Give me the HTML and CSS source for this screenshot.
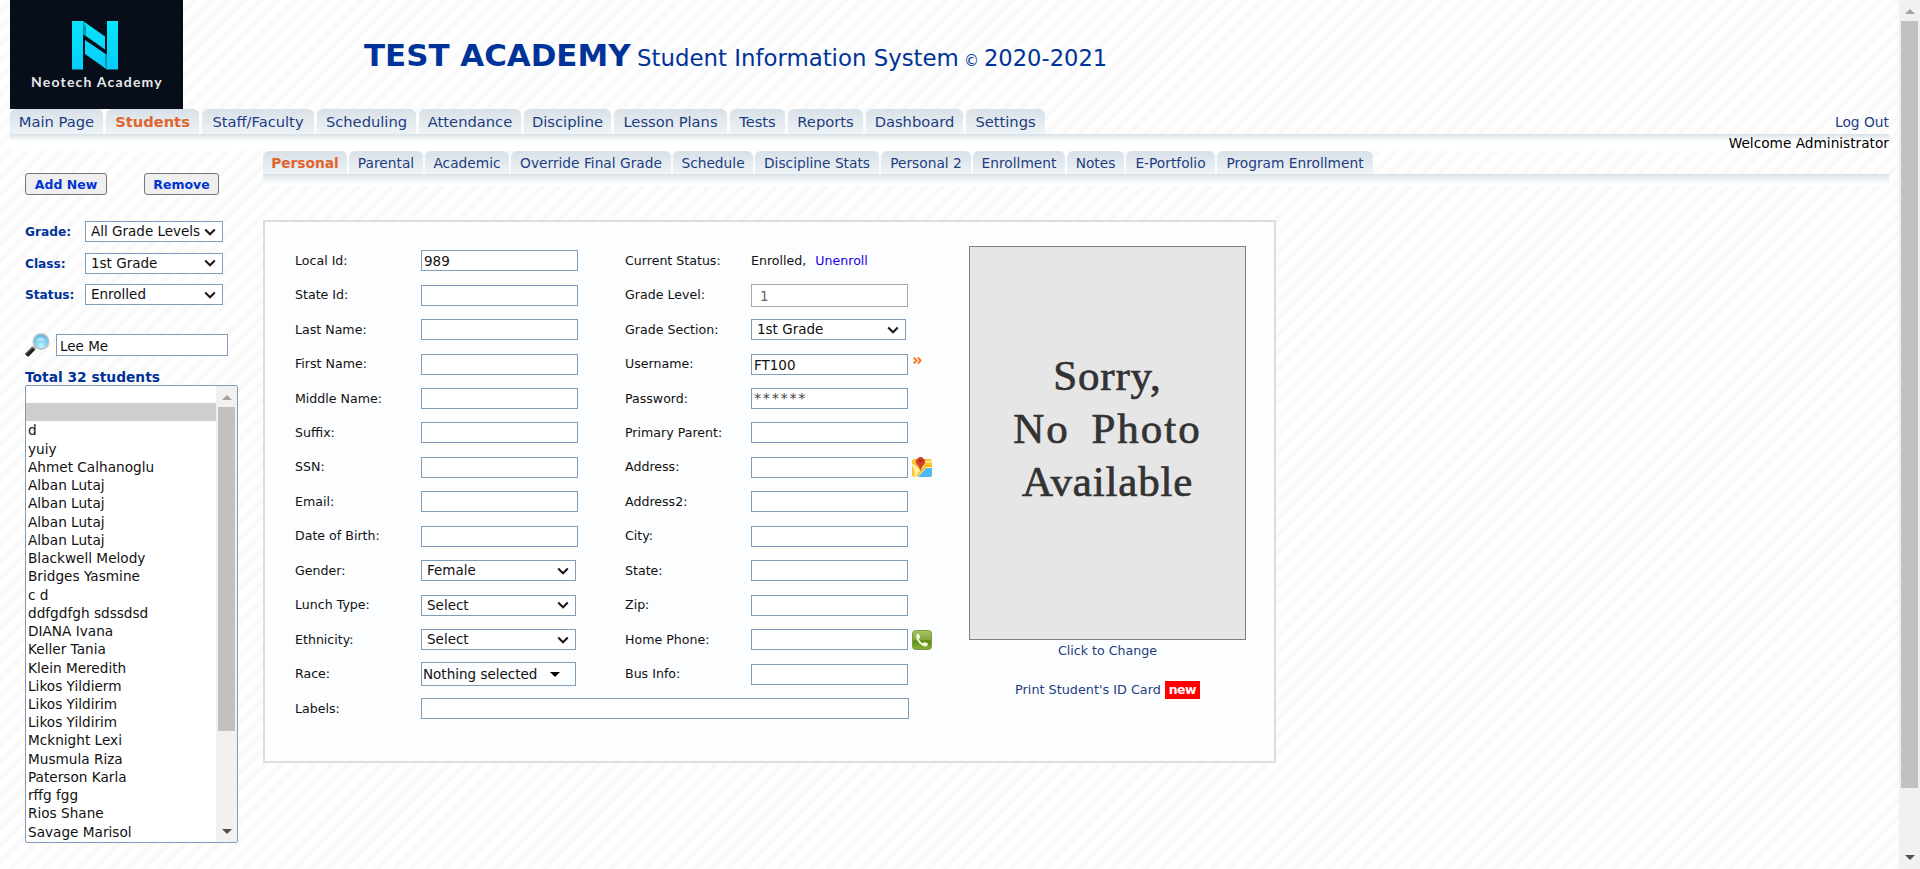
FILE: index.html
```html
<!DOCTYPE html>
<html lang="en">
<head>
<meta charset="utf-8">
<title>Test Academy - Student Information System</title>
<link rel="stylesheet" href="styles.css">
</head>
<body>
<svg width="0" height="0" class="defs">
  <defs>
    <symbol id="chev" viewBox="0 0 12 8"><path d="M1.2 1.5 6 6.2l4.800-4.700" fill="none" stroke="#1a1a1a" stroke-width="2.100"/></symbol>
    <symbol id="up" viewBox="0 0 10 5"><path d="M0 5 5 0l5 5z"/></symbol>
    <symbol id="down" viewBox="0 0 10 5"><path d="M0 0h10L5 5z"/></symbol>
  </defs>
</svg>
<div class="window">
  <div class="page">
    <header class="header">
      <div class="logo">
        <svg class="logo-mark" viewBox="0 0 46 49" width="46" height="49">
          <defs><linearGradient id="cy" x1="0" y1="0" x2="0" y2="1"><stop offset="0" stop-color="#08e6fa"/><stop offset="1" stop-color="#07ccfb"/></linearGradient></defs>
          <path fill="url(#cy)" d="M0 0h11l22 15.500V28.500L11 13V48.500H0zM35 0h11v48.500H35L13 33V19l22 15z"/>
          <path d="M11 0v13l3 2V5z" fill="#0595b0"/><path d="M35 48.500V34l-2-1.500v12z" fill="#0595b0"/>
        </svg>
        <span class="logo-text">Neotech Academy</span>
      </div>
      <h1 class="title"><b>TEST ACADEMY</b><span class="sub">Student Information System</span><span class="copy">©</span><span class="year">2020-2021</span></h1>
    </header>
    <nav class="main-nav">
      <a class="tab">Main Page</a><a class="tab active">Students</a><a class="tab">Staff/Faculty</a><a class="tab">Scheduling</a><a class="tab">Attendance</a><a class="tab">Discipline</a><a class="tab">Lesson Plans</a><a class="tab">Tests</a><a class="tab">Reports</a><a class="tab">Dashboard</a><a class="tab">Settings</a>
      <a class="logout">Log Out</a>
    </nav>
    <div class="nav-bar"><span>Welcome Administrator</span></div>
    <div class="body">
      <aside class="side">
        <div class="buttons"><span class="btn add">Add New</span><span class="btn rem">Remove</span></div>
        <div class="filters">
          <label>Grade:</label><div class="select"><span>All Grade Levels</span><svg width="12" height="8"><use href="#chev"/></svg></div>
          <label>Class:</label><div class="select"><span>1st Grade</span><svg width="12" height="8"><use href="#chev"/></svg></div>
          <label>Status:</label><div class="select"><span>Enrolled</span><svg width="12" height="8"><use href="#chev"/></svg></div>
        </div>
        <div class="search">
          <svg width="25" height="25" viewBox="0 0 25 25">
            <defs><radialGradient id="lens" cx=".5" cy=".8" r=".8"><stop offset="0" stop-color="#c4f4ff"/><stop offset=".5" stop-color="#7fd2f3"/><stop offset="1" stop-color="#4eaee0"/></radialGradient></defs>
            <path d="M1.500 22.500 9 15" stroke="#222" stroke-width="4.500"/><path d="M1 20.500 8 14" stroke="#888" stroke-width="1"/>
            <path d="M8.500 15.500l2-2" stroke="#999" stroke-width="2.500"/>
            <circle cx="16" cy="8.500" r="7.600" fill="url(#lens)" stroke="#bcc3ca" stroke-width="1.800"/>
            <path d="M11 7a5.500 4.500 0 0 1 10 0q-5 2-10 0z" fill="#d8f0fb" opacity=".6"/>
          </svg>
          <div class="input">Lee Me</div>
        </div>
        <div class="total">Total 32 students</div>
        <div class="listbox">
          <ul>
            <li></li><li class="sel"></li><li>d</li><li>yuiy</li><li>Ahmet Calhanoglu</li><li>Alban Lutaj</li><li>Alban Lutaj</li><li>Alban Lutaj</li><li>Alban Lutaj</li><li>Blackwell Melody</li><li>Bridges Yasmine</li><li>c d</li><li>ddfgdfgh sdssdsd</li><li>DIANA Ivana</li><li>Keller Tania</li><li>Klein Meredith</li><li>Likos Yildierm</li><li>Likos Yildirim</li><li>Likos Yildirim</li><li>Mcknight Lexi</li><li>Musmula Riza</li><li>Paterson Karla</li><li>rffg fgg</li><li>Rios Shane</li><li>Savage Marisol</li>
          </ul>
          <div class="scroll list-scroll"><svg class="dim" width="10" height="5"><use href="#up"/></svg><i></i><svg width="10" height="5"><use href="#down"/></svg></div>
        </div>
      </aside>
      <main class="content">
        <nav class="sub-nav">
          <a class="tab active">Personal</a><a class="tab">Parental</a><a class="tab">Academic</a><a class="tab">Override Final Grade</a><a class="tab">Schedule</a><a class="tab">Discipline Stats</a><a class="tab">Personal 2</a><a class="tab">Enrollment</a><a class="tab">Notes</a><a class="tab">E-Portfolio</a><a class="tab">Program Enrollment</a>
        </nav>
        <div class="sub-bar"></div>
        <section class="panel">
          <div class="form">
            <label>Local Id:</label><div class="input">989</div><label>Current Status:</label><div class="plain">Enrolled,<a>Unenroll</a></div>
            <label>State Id:</label><div class="input"></div><label>Grade Level:</label><div class="input disabled">1</div>
            <label>Last Name:</label><div class="input"></div><label>Grade Section:</label><div class="select"><span>1st Grade</span><svg width="12" height="8"><use href="#chev"/></svg></div>
            <label>First Name:</label><div class="input"></div><label>Username:</label><div class="cell"><div class="input">FT100</div><svg class="more" width="9" height="7" viewBox="0 0 9 7"><path d="M.8.500 3.500 3.500.8 6.500M4.900.500l2.800 3-2.800 3" fill="none" stroke="#ff7a22" stroke-width="2"/></svg></div>
            <label>Middle Name:</label><div class="input"></div><label>Password:</label><div class="input pass">******</div>
            <label>Suffix:</label><div class="input"></div><label>Primary Parent:</label><div class="input"></div>
            <label>SSN:</label><div class="input"></div><label>Address:</label><div class="cell"><div class="input"></div>
              <svg class="ico" width="20" height="20" viewBox="0 0 20 20">
                <defs><clipPath id="mc"><rect y="2" width="20" height="18" rx="2.500"/></clipPath></defs>
                <g clip-path="url(#mc)"><rect width="20" height="20" fill="#fbc52c"/><path d="M5 20l7-7 2-3 6-2v12z" fill="#4db9f5"/><path d="M0 9q4 4 2 11h4l8-9h6V8h-8L8 14Q5 8 0 7zM12 4h8v1.500h-8z" fill="#fff0b0"/><path d="M13 8h7v2h-6l-8 9H4z" fill="#fbb917"/></g>
                <path d="M8.500 14Q8 10 5 7.500A4.500 4.500 0 1 1 12 7.500Q9 10 8.500 14z" fill="#d8402c"/><circle cx="8.500" cy="3.800" r="1.600" fill="#a82a1c"/>
              </svg></div>
            <label>Email:</label><div class="input"></div><label>Address2:</label><div class="input"></div>
            <label>Date of Birth:</label><div class="input"></div><label>City:</label><div class="input"></div>
            <label>Gender:</label><div class="select"><span>Female</span><svg width="12" height="8"><use href="#chev"/></svg></div><label>State:</label><div class="input"></div>
            <label>Lunch Type:</label><div class="select"><span>Select</span><svg width="12" height="8"><use href="#chev"/></svg></div><label>Zip:</label><div class="input"></div>
            <label>Ethnicity:</label><div class="select"><span>Select</span><svg width="12" height="8"><use href="#chev"/></svg></div><label>Home Phone:</label><div class="cell"><div class="input"></div>
              <svg class="ico" width="20" height="20" viewBox="0 0 20 20">
                <defs><linearGradient id="gr" x1="0" y1="0" x2="0" y2="1"><stop offset="0" stop-color="#a9c468"/><stop offset=".48" stop-color="#84a83a"/><stop offset=".55" stop-color="#5f8a10"/><stop offset="1" stop-color="#86b43a"/></linearGradient></defs>
                <rect x=".5" y=".5" width="19" height="19" rx="3" fill="url(#gr)" stroke="#7c9b45"/>
                <path d="M4.500 4.200 7 3.800l1.200 3.700-1.500 1.400q1.300 3 4.200 4.300l1.500-1.300 3.600 1.600-.8 2.500q-2.200 1-5-.6Q5.200 12 4.300 7.500z" fill="#f2f8e4"/>
              </svg></div>
            <label>Race:</label><div class="select multi"><span>Nothing selected</span><svg width="10" height="5"><use href="#down"/></svg></div><label>Bus Info:</label><div class="input"></div>
            <label>Labels:</label><div class="input wide"></div>
          </div>
          <div class="photo-col">
            <div class="photo">Sorry,<br><span>No Photo</span><br>Available</div>
            <a class="change">Click to Change</a>
            <a class="print">Print Student's ID Card <b>new</b></a>
          </div>
        </section>
      </main>
    </div>
  </div>
  <div class="scroll page-scroll"><svg class="dim" width="10" height="5"><use href="#up"/></svg><i></i><svg width="10" height="5"><use href="#down"/></svg></div>
</div>
</body>
</html>
```
FILE: styles.css
```css
* { box-sizing: border-box; }
body { margin: 0; height: 869px; overflow: hidden; font-family: "DejaVu Sans", sans-serif; font-size: 12.6px; color: #111; background: #fff repeating-linear-gradient(135deg, #fff 0, #fefefe 4px, #f8f8f8 8px, #f9f9f9 9px, #fff 11.8px); }
svg { display: block; flex: none; }
.defs { position: absolute; }
.window { display: flex; height: 869px; }
.page { flex: 1; padding: 0 10px; min-width: 0; }

.header { display: flex; height: 109px; }
.logo { width: 173px; height: 109px; background: #070e1a; display: flex; flex-direction: column; align-items: center; padding: 21px 2px 0 0; }
.logo-mark { margin-right: 1px; }
.logo-text { margin: 3px 0 0 3px; font-family: Lato, sans-serif; font-weight: 700; font-size: 14px; line-height: 18px; letter-spacing: 1.2px; color: #e8e8ea; white-space: nowrap; }
.title { margin: 0 0 0 181px; padding-top: 36px; height: 76px; display: flex; align-items: baseline; font-weight: 400; color: #039; white-space: nowrap; line-height: 38px; }
.title b { font-size: 30.9px; width: 273px; }
.title .sub { font-size: 22.85px; width: 327px; }
.title .copy { font-size: 15px; width: 20px; }
.title .year { font-size: 22.6px; }

.main-nav, .sub-nav { display: flex; white-space: nowrap; }
.tab { display: flex; align-items: center; justify-content: center; border-radius: 6px 6px 0 0; background: linear-gradient(#d8e1e8, #eef3f6); color: #1d3d80; }
.tab.active { color: #e0642c; font-weight: 700; }
.main-nav { height: 25px; gap: 3px; font-size: 14.7px; }
.main-nav .tab:nth-child(1) { width: 93px; }
.main-nav .tab:nth-child(2) { width: 93px; }
.main-nav .tab:nth-child(3) { width: 112px; }
.main-nav .tab:nth-child(4) { width: 99px; }
.main-nav .tab:nth-child(5) { width: 102px; }
.main-nav .tab:nth-child(6) { width: 87px; }
.main-nav .tab:nth-child(7) { width: 113px; }
.main-nav .tab:nth-child(8) { width: 55px; }
.main-nav .tab:nth-child(9) { width: 75px; }
.main-nav .tab:nth-child(10) { width: 97px; }
.main-nav .tab:nth-child(11) { width: 79px; }
.logout { margin-left: auto; color: #1d3d80; font-size: 13.8px; line-height: 26px; }
.nav-bar { height: 17px; background: linear-gradient(#d8e1e8, #f8fafa 6px, #fff 9px); text-align: right; font-size: 13.7px; line-height: 18px; color: #000; }

.body { display: flex; }
.side { width: 253px; padding: 22px 0 0 15px; }
.buttons { display: flex; gap: 37px; }
.btn { height: 22px; border: 1px solid #767676; border-radius: 3px; background: #efefef; color: #0033cf; font-weight: 700; font-size: 12.5px; line-height: 21px; text-align: center; }
.btn.add { width: 82px; }
.btn.rem { width: 75px; }
.filters { margin-top: 26px; display: grid; grid-template-columns: 60px 138px; grid-auto-rows: 21px; row-gap: 10.5px; color: #039; }
.filters label { font-weight: 700; font-size: 12.2px; line-height: 22px; }
.select { height: 21px; border: 1px solid #7f9db9; background: #fff; display: flex; align-items: center; justify-content: space-between; padding: 0 6px 0 5px; font-size: 13.5px; color: #111; white-space: nowrap; }
.select span { overflow: hidden; line-height: 19px; }
.filters .select span { width: 109px; }
.input { height: 21px; border: 1px solid #7f9db9; background: #fff; padding: 0 2px; font-size: 13.5px; line-height: 20px; color: #111; }
.search { display: flex; gap: 6px; margin-top: 28px; }
.search .input { width: 172px; height: 22px; margin-top: 1px; padding-left: 3px; line-height: 22px; }
.total { margin-top: 9px; height: 18px; font-weight: 700; font-size: 13.8px; line-height: 20px; color: #039; }
.listbox { width: 213px; height: 458px; border: 1px solid #7f9db9; border-radius: 2px; background: #fff; display: flex; justify-content: space-between; overflow: hidden; }
.listbox ul { list-style: none; margin: -1px 0 0; padding: 0; width: 190px; font-size: 13.65px; }
.listbox li { height: 18.24px; line-height: 18px; padding-left: 2px; }
.listbox .sel { background: #cecece; }
.scroll { display: flex; flex-direction: column; align-items: center; background: #f1f1f1; width: 21px; fill: #505050; }
.scroll .dim { fill: #a3a3a3; }
.scroll i { background: #c1c1c1; width: 17px; }
.list-scroll { padding-top: 9px; }
.list-scroll i { height: 324px; margin: 7px 0 98px; }
.page-scroll { padding-top: 9px; }
.page-scroll i { height: 767px; margin: 7px 0 67px; }

.content { flex: 1; min-width: 0; }
.sub-nav { height: 23px; gap: 2px; font-size: 13.75px; }
.sub-nav .tab:nth-child(1) { width: 84px; }
.sub-nav .tab:nth-child(2) { width: 74px; }
.sub-nav .tab:nth-child(3) { width: 84px; }
.sub-nav .tab:nth-child(4) { width: 160px; }
.sub-nav .tab:nth-child(5) { width: 80px; }
.sub-nav .tab:nth-child(6) { width: 124px; }
.sub-nav .tab:nth-child(7) { width: 90px; }
.sub-nav .tab:nth-child(8) { width: 92px; }
.sub-nav .tab:nth-child(9) { width: 57px; }
.sub-nav .tab:nth-child(10) { width: 89px; }
.sub-nav .tab:nth-child(11) { width: 156px; }
.sub-bar { height: 12px; background: linear-gradient(#d8e1e8, #f2f6f8 6px, #fff 11px); }
.panel { margin-top: 34px; width: 1013px; height: 543px; border: 2px solid #ddd; background: #fcfdfe; display: flex; padding: 21.500px 0 0 30px; }
.form { width: 674px; display: grid; grid-template-columns: 126px 204px 126px 1fr; grid-auto-rows: 34.46px; align-content: start; align-items: center; white-space: nowrap; }
.form label { line-height: 16px; }
.form .input { width: 157px; }
.form .select { width: 155px; }
.form .input.disabled { height: 23px; border-color: #a9a9a9; color: #666; padding-left: 8px; line-height: 22px; }
.form .input.pass { line-height: 19px; color: #444; font-size: 14.5px; letter-spacing: 1.6px; }
.form .input.wide { width: 488px; grid-column: 2 / -1; }
.form .select.multi { height: 24px; background: #fcfdfe; padding: 0 15px 0 1px; }
.form .multi svg { fill: #000; }
.cell { display: flex; align-items: center; gap: 4px; }
.more { margin: -7px 0 0 1px; }
.plain a { color: #1500e6; margin-left: 9px; }
.photo-col { padding-top: 2.500px; width: 277px; display: flex; flex-direction: column; align-items: center; color: #1d3d80; font-size: 12.6px; }
.photo { width: 277px; height: 394px; flex: none; border: 1px solid #808080; background: #e6e6e6; padding-top: 102px; text-align: center; font-family: "Liberation Serif", serif; color: #333; font-size: 43px; line-height: 53px; -webkit-text-stroke: .7px #333; letter-spacing: .8px; }
.photo span { letter-spacing: 2px; word-spacing: 9px; }
.change { margin-top: 3px; line-height: 16px; }
.print { margin-top: 22px; display: flex; gap: 4px; align-items: center; line-height: 18px; font-size: 12.8px; }
.print b { background: #f00; color: #fff; width: 35px; height: 18px; text-align: center; font: 700 12.5px/17px "DejaVu Sans", sans-serif; letter-spacing: -.5px; }
```
